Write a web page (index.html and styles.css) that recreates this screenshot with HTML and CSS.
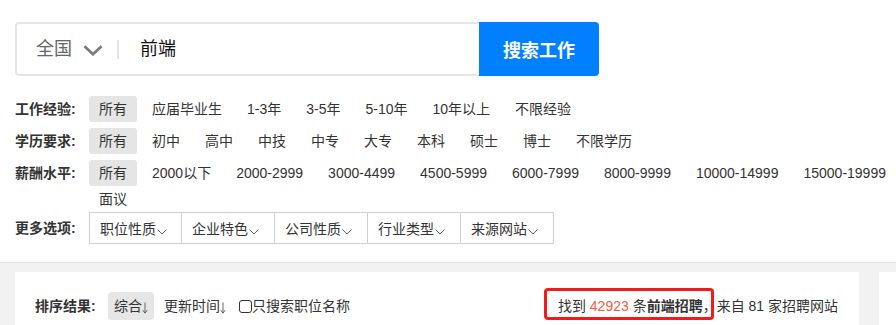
FILE: index.html
```html
<!DOCTYPE html>
<html lang="zh-CN">
<head>
<meta charset="utf-8">
<title>搜索工作</title>
<link rel="stylesheet" href="styles.css">
</head>
<body>
<div class="page">
  <div class="search">
    <div class="search-field">
      <span class="city">全国</span>
      <svg class="city-caret" width="20" height="11" viewBox="0 0 20 11"><path d="M1.5 1.2 L10 9.3 L18.5 1.2" fill="none" stroke="#7a7a7a" stroke-width="2.6"/></svg>
      <span class="divider"></span>
      <span class="keyword">前端</span>
    </div>
    <button class="search-btn">搜索工作</button>
  </div>

  <div class="filters">
    <div class="filter-row">
      <span class="filter-label">工作经验:</span>
      <div class="opts">
        <span class="opt active">所有</span><span class="opt">应届毕业生</span><span class="opt">1-3年</span><span class="opt">3-5年</span><span class="opt">5-10年</span><span class="opt">10年以上</span><span class="opt">不限经验</span>
      </div>
    </div>
    <div class="filter-row">
      <span class="filter-label">学历要求:</span>
      <div class="opts">
        <span class="opt active">所有</span><span class="opt">初中</span><span class="opt">高中</span><span class="opt">中技</span><span class="opt">中专</span><span class="opt">大专</span><span class="opt">本科</span><span class="opt">硕士</span><span class="opt">博士</span><span class="opt">不限学历</span>
      </div>
    </div>
    <div class="filter-row tight">
      <span class="filter-label">薪酬水平:</span>
      <div class="opts">
        <span class="opt active">所有</span><span class="opt">2000以下</span><span class="opt">2000-2999</span><span class="opt">3000-4499</span><span class="opt">4500-5999</span><span class="opt">6000-7999</span><span class="opt">8000-9999</span><span class="opt">10000-14999</span><span class="opt">15000-19999</span><span class="opt">面议</span>
      </div>
    </div>
    <div class="filter-row more">
      <span class="filter-label">更多选项:</span>
      <div class="dropdowns">
        <span class="dd">职位性质<svg class="dd-caret" width="10" height="6" viewBox="0 0 10 6"><path d="M0.5 0.5 L5 5 L9.5 0.5" fill="none" stroke="#666" stroke-width="1"/></svg></span>
        <span class="dd">企业特色<svg class="dd-caret" width="10" height="6" viewBox="0 0 10 6"><path d="M0.5 0.5 L5 5 L9.5 0.5" fill="none" stroke="#666" stroke-width="1"/></svg></span>
        <span class="dd">公司性质<svg class="dd-caret" width="10" height="6" viewBox="0 0 10 6"><path d="M0.5 0.5 L5 5 L9.5 0.5" fill="none" stroke="#666" stroke-width="1"/></svg></span>
        <span class="dd">行业类型<svg class="dd-caret" width="10" height="6" viewBox="0 0 10 6"><path d="M0.5 0.5 L5 5 L9.5 0.5" fill="none" stroke="#666" stroke-width="1"/></svg></span>
        <span class="dd">来源网站<svg class="dd-caret" width="10" height="6" viewBox="0 0 10 6"><path d="M0.5 0.5 L5 5 L9.5 0.5" fill="none" stroke="#666" stroke-width="1"/></svg></span>
      </div>
    </div>
  </div>

  <div class="results-band">
    <div class="results-card">
      <div class="sort-bar">
        <div class="sort-left">
          <span class="sort-label">排序结果:</span>
          <span class="sort-item active">综合<svg class="sort-arrow" width="6" height="12" viewBox="0 0 6 12"><path d="M3 0.5 V11 M0.8 8.2 L3 11.2 L5.2 8.2" fill="none" stroke="#666" stroke-width="1"/></svg></span>
          <span class="sort-item">更新时间<svg class="sort-arrow" width="6" height="12" viewBox="0 0 6 12"><path d="M3 0.5 V11 M0.8 8.2 L3 11.2 L5.2 8.2" fill="none" stroke="#666" stroke-width="1"/></svg></span>
          <label class="only-title"><input type="checkbox" class="check">只搜索职位名称</label>
        </div>
        <div class="summary"><span class="hl">找到 <span class="count">42923</span> 条<b>前端招聘</b>，</span>来自 81 家招聘网站</div>
      </div>
    </div>
    <div class="sidebar"></div>
  </div>
</div>
</body>
</html>
```

FILE: styles.css
```css
html, body {
  margin: 0;
  padding: 0;
  overflow: hidden;
  background: #fff;
}

body {
  width: 896px;
  height: 325px;
  font-family: "Liberation Sans", "Noto Sans CJK SC", sans-serif;
  font-size: 14px;
  color: #333;
}

.page {
  width: 1100px;
}

/* search bar */
.search {
  display: flex;
  width: 584px;
  height: 54px;
  margin: 22px 0 0 15px;
}

.search-field {
  flex: 1;
  display: flex;
  align-items: center;
  border: 2px solid #e6e6e6;
  border-right: 0;
  border-radius: 4px 0 0 4px;
  padding-left: 19px;
}

.city {
  font-size: 18px;
  line-height: 24px;
  color: #666;
}

.city-caret {
  margin-left: 11px;
  margin-top: 2px;
}

.divider {
  width: 2px;
  height: 19px;
  background: #e3e3e3;
  margin-left: 14px;
}

.keyword {
  font-size: 18px;
  line-height: 24px;
  color: #111;
  margin-left: 21px;
}

.search-btn {
  width: 120px;
  border: 0;
  padding: 0;
  background: #0080ff;
  color: #fff;
  font-family: "Liberation Sans", "Noto Sans CJK SC", sans-serif;
  font-size: 18px;
  font-weight: bold;
  border-radius: 0 4px 4px 0;
}

/* filters */
.filters {
  margin: 20px 0 0 15px;
  padding-bottom: 18px;
}

.filter-row {
  display: flex;
  align-items: flex-start;
  margin-bottom: 6px;
}

.filter-row.tight {
  margin-bottom: 0;
}

.filter-row.more {
  margin-bottom: 0;
}

.filter-label {
  width: 74px;
  flex-shrink: 0;
  font-weight: bold;
  line-height: 26px;
  color: #333;
}

.filter-row.more .filter-label {
  line-height: 32px;
}

.opts {
  display: flex;
  flex-wrap: wrap;
  width: 835px;
}

.opt {
  padding: 0 10px;
  margin-right: 5px;
  line-height: 26px;
  border-radius: 3px;
  white-space: nowrap;
}

.opt.active {
  background: #e5e5e5;
}

.dropdowns {
  display: flex;
}

.dd {
  display: flex;
  align-items: center;
  flex-shrink: 0;
  box-sizing: border-box;
  width: 94px;
  height: 32px;
  padding-left: 10px;
  border: 1px solid #cfcfcf;
  margin-left: -1px;
  white-space: nowrap;
}

.dd:first-child {
  margin-left: 0;
  width: 93px;
}

.dd-caret {
  margin-top: 7px;
  margin-left: 1px;
}

/* results */
.results-band {
  display: flex;
  gap: 20px;
  height: 80px;
  background: #f2f2f2;
  border-top: 1px solid #e2e2e2;
  padding: 9px 0 0 15px;
}

.results-card {
  width: 844px;
  flex-shrink: 0;
  box-sizing: border-box;
  background: #fff;
  padding: 20px 21px 20px 20px;
}

.sidebar {
  width: 220px;
  flex-shrink: 0;
  background: #fff;
}

.sort-bar {
  display: flex;
  align-items: center;
  justify-content: space-between;
  height: 28px;
}

.sort-left {
  display: flex;
  align-items: center;
}

.sort-label {
  width: 73px;
  font-weight: bold;
  line-height: 20px;
}

.sort-item {
  display: flex;
  align-items: center;
  line-height: 28px;
  padding: 0 6px;
  border-radius: 4px;
}

.sort-item + .sort-item {
  margin-left: 4px;
}

.sort-item.active {
  background: #e6e6e6;
}

.sort-arrow {
  margin-top: 4px;
}

.only-title {
  display: flex;
  align-items: center;
  margin-left: 7px;
  line-height: 20px;
}

.check {
  appearance: none;
  -webkit-appearance: none;
  width: 13px;
  height: 13px;
  margin: 0;
  border: 1px solid #333;
  border-radius: 3px;
  background: #fff;
}

.summary {
  white-space: nowrap;
  line-height: 20px;
}

.summary b {
  font-weight: bold;
}

.count {
  color: #fa5a3c;
}

.hl {
  position: relative;
  display: inline-block;
}

.hl::after {
  content: "";
  position: absolute;
  left: -14px;
  right: 3px;
  top: -8px;
  bottom: -4px;
  border: 3px solid #f31a1a;
  border-radius: 4px;
}
```
